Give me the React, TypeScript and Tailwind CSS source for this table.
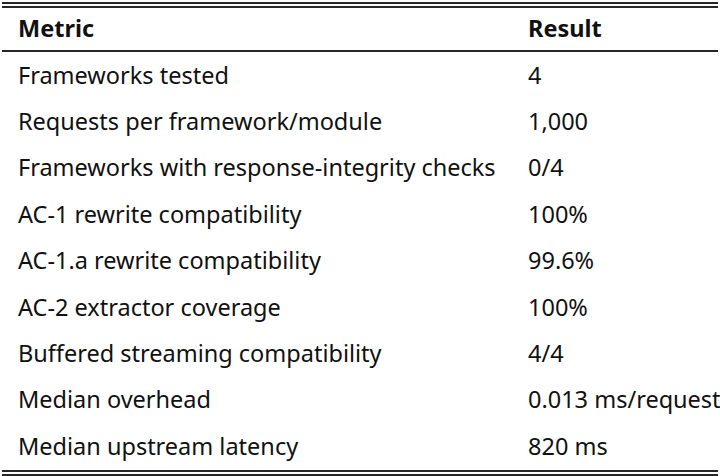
const rows: [string, string][] = [
  ["Frameworks tested", "4"],
  ["Requests per framework/module", "1,000"],
  ["Frameworks with response-integrity checks", "0/4"],
  ["AC-1 rewrite compatibility", "100%"],
  ["AC-1.a rewrite compatibility", "99.6%"],
  ["AC-2 extractor coverage", "100%"],
  ["Buffered streaming compatibility", "4/4"],
  ["Median overhead", "0.013 ms/request"],
  ["Median upstream latency", "820 ms"],
];

const Rule = ({ className = "" }: { className?: string }) => (
  <div className={`h-[2px] bg-[#262626] ${className}`} />
);

const App = () => {
  return (
    <div className="w-[720px] h-[476px] bg-white overflow-hidden px-[2px] pt-[2px] font-['Noto_Sans',sans-serif] text-[#111] text-[23.5px]">
      <Rule />
      <Rule className="mt-[2px]" />
      <div className="grid grid-cols-[526px_1fr] h-[42px] items-center font-bold">
        <div className="pl-4">Metric</div>
        <div>Result</div>
      </div>
      <Rule />
      {rows.map(([metric, result]) => (
        <div
          key={metric}
          className="grid grid-cols-[526px_1fr] h-[46.4px] items-center whitespace-nowrap"
        >
          <div className="pl-4">{metric}</div>
          <div>{result}</div>
        </div>
      ))}
      <Rule />
      <Rule className="mt-[2px]" />
    </div>
  );
};

export default App;
